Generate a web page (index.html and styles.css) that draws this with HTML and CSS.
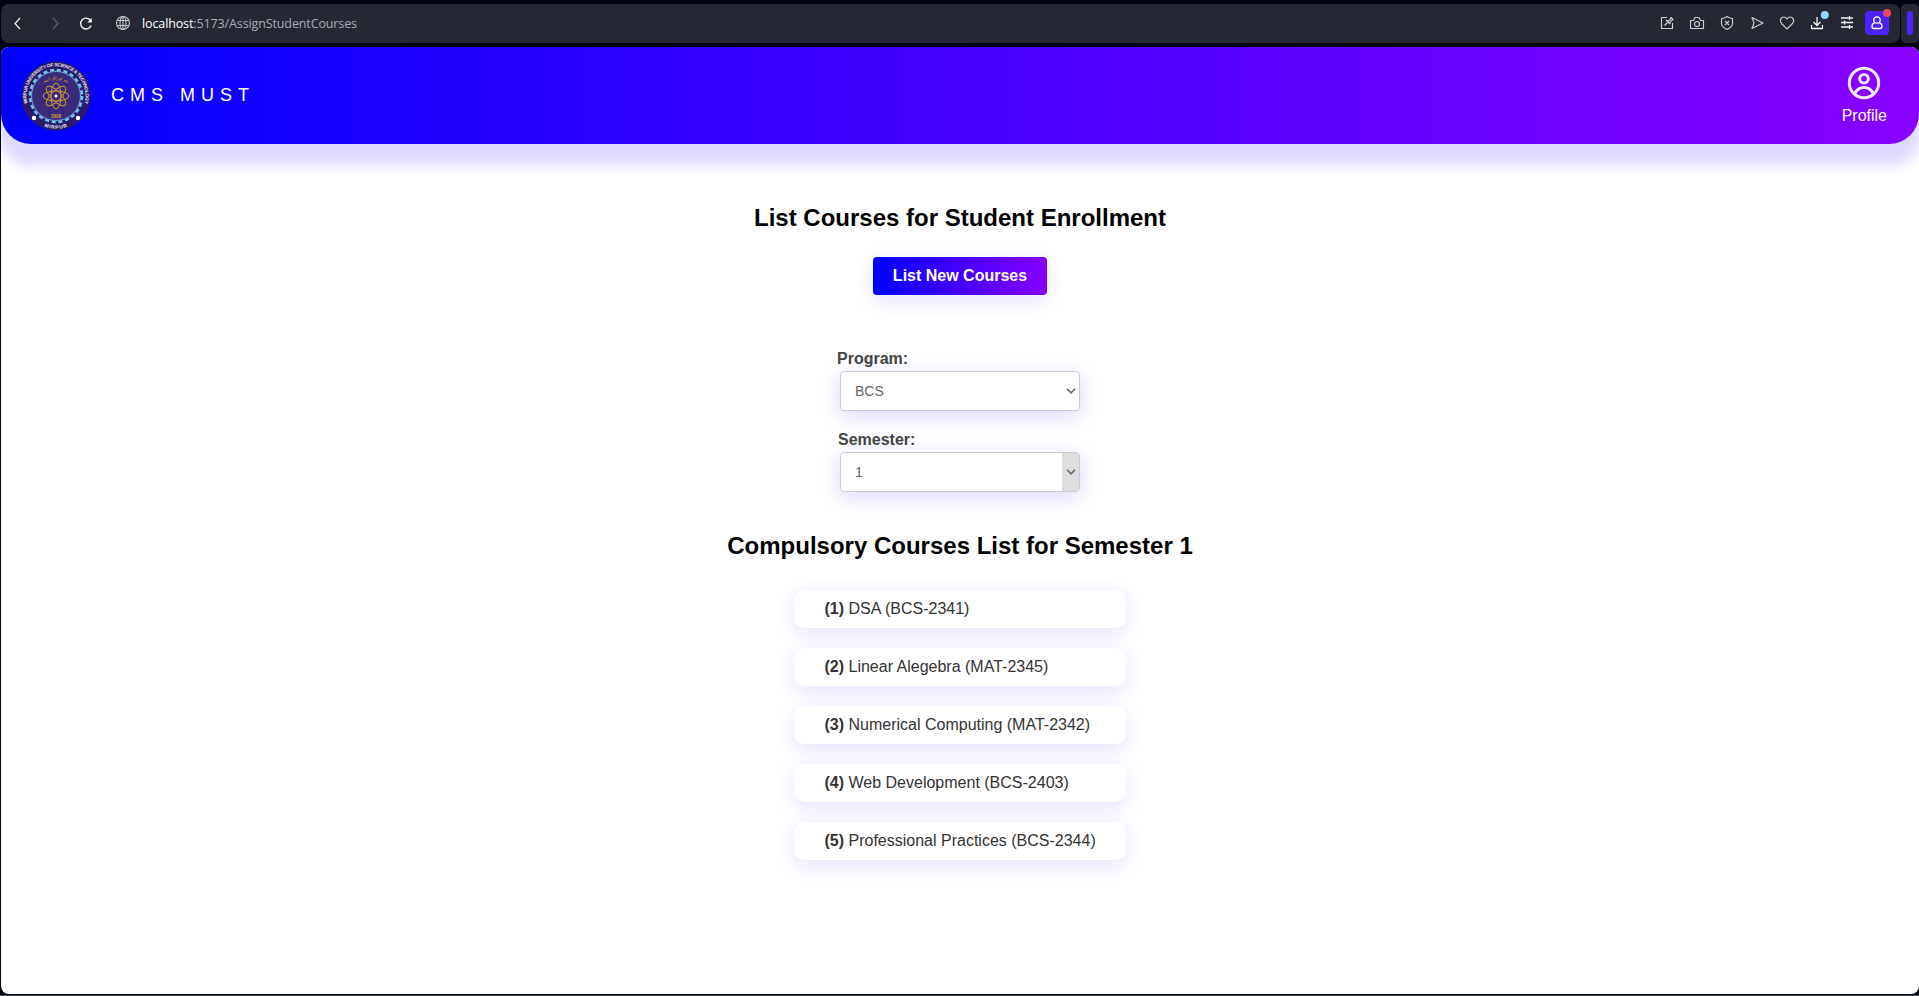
FILE: index.html
```html
<!DOCTYPE html>
<html lang="en">
<head>
<meta charset="utf-8">
<title>CMS MUST</title>
<link rel="stylesheet" href="styles.css">
</head>
<body>
<div class="toolbar-row">
  <div class="toolbar">
    <svg class="nav-icons" width="140" height="39" viewBox="0 0 140 39" fill="none">
      <path d="M19 14L14 19.500l5 5.500" stroke="#f4f5f8" stroke-width="1.2"/>
      <path d="M52 14l5 5.500-5 5.500" stroke="#5d616c" stroke-width="1.2"/>
      <path d="M89.500 16.500a5.400 5.400 0 1 0 .6 5" stroke="#f4f5f8" stroke-width="1.4"/>
      <path d="M90.800 14v4.500h-4.500z" fill="#f4f5f8"/>
      <g stroke="#c6c9d2" stroke-width="1.1"><circle cx="122" cy="19" r="6.500"/><ellipse cx="122" cy="19" rx="3" ry="6.500"/><path d="M116.300 16.500h11.400M116.300 21.500h11.400M122 12.500v13"/></g>
    </svg>
    <div class="url"><span class="host">localhost</span>:5173/AssignStudentCourses</div>
    <svg class="tool-icons" width="260" height="39" viewBox="1640 4 260 39" fill="none" stroke="#c9ccd4" stroke-width="1.150" stroke-linejoin="round">
      <path d="M1667 17.500h-5.500v11h11v-5.500M1664.500 25.500l3-3M1666 20l4 4M1667 21l2.500-.8 1.500-2.700 2 2-2.700 2-.5 2.500"/>
      <path d="M1690.500 20.500h3l1.500-3h4l1.500 3h3v8h-13z"/><circle cx="1697" cy="24" r="2.500"/>
      <path d="M1727 16.500q3 2 5.500 2v5q0 3.500-5.500 6q-5.500-2.500-5.500-6v-5q3 0 5.500-2zM1725 21l4 4M1729 21l-4 4"/>
      <path d="M1752 17.500l11 5.500-11 5.500 2-5.500z"/>
      <path d="M1787 29l-5.500-5.500q-2.500-3.500.5-6q3-1.500 5 1.500q2-3 5-1.500q3 2.500.5 6z"/>
      <g stroke="#f4f5f8" stroke-width="1.300"><path d="M1811.500 25v3.500h11v-3.500M1817 17v8M1813.500 22l3.500 3.500 3.500-3.500"/><path d="M1841 18h12M1841 22.500h12M1841 27h12M1849.500 16v4M1844.500 20.500v4M1849.500 25v4"/></g>
      <circle cx="1824.800" cy="15" r="4" fill="#8fd8ff" stroke="none"/>
      <rect x="1865" y="11" width="24" height="24" rx="4" fill="#4d22fb" stroke="none"/>
      <g stroke="#fff" stroke-width="1.300"><circle cx="1877" cy="20" r="3.200"/><path d="M1874.500 22.800q-2.500.7-2.500 3.700 0 2 2 2h6q2 0 2-2 0-3-2.500-3.700"/></g>
      <circle cx="1887" cy="13" r="4" fill="#e84a5f" stroke="none"/>
    </svg>
  </div>
  <div class="side-toggle"><span class="side-bar"></span></div>
</div>

<div class="page">
  <header class="header">
    <div class="brand">
      <svg width="70" height="70" viewBox="0 0 70 70">
        <defs><path id="ring-top" d="M10 50.500A29.500 29.500 0 1 1 60 50.500"/><path id="ring-bottom" d="M17 62.500A33 33 0 0 0 53 62.500"/><path id="motto" d="M23 22Q35 15 47 22"/></defs>
        <circle cx="35" cy="35" r="34.700" fill="#2a1a69"/>
        <circle cx="35" cy="35" r="25.800" fill="#3b2a7c"/>
        <circle cx="35" cy="35" r="26" fill="none" stroke="#72c2ec" stroke-width="2.600" stroke-dasharray="4.080 2.727"/>
        <circle cx="35" cy="35" r="24.500" fill="none" stroke="#72c2ec" stroke-width=".8"/>
        <text class="seal-text" text-anchor="middle"><textPath href="#ring-top" startOffset="50%">MIRPUR UNIVERSITY OF SCIENCE &amp; TECHNOLOGY</textPath></text>
        <text class="seal-text seal-city" text-anchor="middle"><textPath href="#ring-bottom" startOffset="50%">MIRPUR</textPath></text>
        <text class="seal-motto" text-anchor="middle"><textPath href="#motto" startOffset="50%">تعلیم اوراق انسان</textPath></text>
        <text class="seal-year" x="35" y="56.800" text-anchor="middle">2008</text>
        <circle cx="13" cy="57" r="2.200" fill="#fff"/><circle cx="57" cy="57" r="2.200" fill="#fff"/>
        <g fill="none" stroke="#d9a529" stroke-width=".9"><ellipse cx="35" cy="35" rx="13" ry="5"/><ellipse cx="35" cy="35" rx="13" ry="5" transform="rotate(45 35 35)"/><ellipse cx="35" cy="35" rx="13" ry="5" transform="rotate(90 35 35)"/><ellipse cx="35" cy="35" rx="13" ry="5" transform="rotate(135 35 35)"/></g>
        <circle cx="35" cy="35" r="1.500" fill="#fff"/>
      </svg>
      <span class="brand-name">CMS MUST</span>
    </div>
    <div class="profile">
      <svg width="34" height="34" viewBox="0 0 34 34" fill="none" stroke="#f3e9f5" stroke-width="3"><circle cx="17" cy="17" r="14.700"/><circle cx="17" cy="12.700" r="4.300"/><path d="M7.500 28q3-6.500 9.500-6.500t9.500 6.500"/></svg>
      <span>Profile</span>
    </div>
  </header>

  <main class="content">
    <h2 class="title">List Courses for Student Enrollment</h2>
    <button class="primary">List New Courses</button>
    <form class="filters">
      <label class="label" for="program">Program:</label>
      <div class="field"><select id="program" class="select"><option>BCS</option></select><span class="arrow"><svg width="10" height="6" viewBox="0 0 10 6"><path d="M1 .8l4 4 4-4"/></svg></span></div>
      <label class="label label-semester" for="semester">Semester:</label>
      <div class="field"><select id="semester" class="select"><option>1</option></select><span class="arrow arrow-active"><svg width="10" height="6" viewBox="0 0 10 6"><path d="M1 .8l4 4 4-4"/></svg></span></div>
    </form>
    <h2 class="title title-list">Compulsory Courses List for Semester 1</h2>
    <div class="courses">
      <div class="course"><b>(1)</b> DSA (BCS-2341)</div>
      <div class="course"><b>(2)</b> Linear Alegebra (MAT-2345)</div>
      <div class="course"><b>(3)</b> Numerical Computing (MAT-2342)</div>
      <div class="course"><b>(4)</b> Web Development (BCS-2403)</div>
      <div class="course"><b>(5)</b> Professional Practices (BCS-2344)</div>
    </div>
  </main>
</div>
</body>
</html>
```
FILE: styles.css
```css
* { box-sizing: border-box; }
body {
  margin: 0;
  height: 996px;
  overflow: hidden;
  display: flex;
  flex-direction: column;
  background: #020413;
  border-bottom: 1px solid #43454f;
  font-family: "Liberation Sans", Arial, sans-serif;
}
.toolbar-row { flex: none; display: flex; gap: 1px; height: 47px; padding: 4px 0 4px 1px; }
.toolbar {
  flex: 1;
  display: flex;
  align-items: center;
  background: #252833;
  border-radius: 8px;
}
.nav-icons { margin-right: 1px; }
.nav-icons, .tool-icons { flex: none; display: block; }
.url {
  flex: 1;
  font-family: "Open Sans", "Noto Sans", sans-serif;
  font-size: 12.5px;
  letter-spacing: -0.12px;
  line-height: 20px;
  color: #a9adb8;
  white-space: nowrap;
}
.host { color: #fff; }
.side-toggle {
  width: 18px;
  padding: 7px 6px 8px;
  display: flex;
  background: #252833;
  border-radius: 5px;
}
.side-bar { width: 6px; border-radius: 3px; background: #4d22fb; }
.page {
  flex: none;
  height: 947px;
  margin-left: 1px;
  background: #fff;
  border-radius: 8px;
  overflow: hidden;
}
.header {
  display: flex;
  justify-content: space-between;
  height: 97px;
  padding: 14px 32px 0 20px;
  color: #fff;
  background: linear-gradient(to right, #0000ff, #8800ff);
  border-radius: 0 0 30px 30px;
  box-shadow: 0 20px 12px 2px rgba(50, 20, 255, 0.16);
}
.brand { display: flex; height: 70px; align-items: center; gap: 20px; }
.brand-name { font-size: 18px; line-height: 20px; letter-spacing: 6px; padding-bottom: 2px; }
.seal-text { font-size: 4.7px; font-weight: bold; letter-spacing: -0.25px; fill: #e9e6f5; }
.seal-city { font-size: 5px; letter-spacing: 0.7px; }
.seal-motto { font: 4.5px "DejaVu Sans", sans-serif; fill: #e1aa20; }
.seal-year { font-size: 4.5px; font-weight: bold; fill: #d6a52e; }
.profile { display: flex; flex-direction: column; align-items: center; padding-top: 5px; gap: 7px; font-size: 16px; }
.profile svg { display: block; }
.content { display: flex; flex-direction: column; align-items: center; padding-top: 60px; }
.title { margin: 0; font-size: 24px; line-height: 28px; color: #000; }
.primary {
  width: 174px;
  height: 38px;
  margin: 25px 0 0;
  padding: 0;
  border: 0;
  border-radius: 4px;
  color: #fff;
  font: bold 16px "Liberation Sans", Arial, sans-serif;
  background: linear-gradient(to right, #0000ff, #8800ff);
  box-shadow: 0 5px 20px rgba(50, 20, 255, 0.12);
}
.filters { width: 240px; margin-top: 55px; }
.label { display: block; height: 21px; margin-left: -3px; line-height: 18px; font-size: 16px; font-weight: bold; color: #444; }
.label-semester { margin: 20px 0 0 -2px; }
.field { position: relative; height: 40px; }
.select {
  appearance: none;
  width: 240px;
  height: 40px;
  padding: 0 14px;
  border: 1px solid #c9cbd9;
  border-radius: 4px;
  background: #fff;
  color: #666;
  font: 14px "Liberation Sans", Arial, sans-serif;
  box-shadow: 0 5px 20px rgba(50, 20, 255, 0.17);
}
.arrow {
  position: absolute;
  top: 1px;
  right: 1px;
  bottom: 1px;
  width: 17px;
  display: flex;
  align-items: center;
  justify-content: center;
  pointer-events: none;
}
.arrow path { fill: none; stroke: #666; stroke-width: 1.6; }
.arrow-active { background: #dedede; }
.title-list { margin-top: 40px; }
.courses { width: 332px; margin-top: 30px; display: flex; flex-direction: column; gap: 20px; }
.course {
  height: 38px;
  padding: 0 30px 0 30.5px;
  border-radius: 10px;
  background: #fff;
  color: #333;
  font-size: 16px;
  line-height: 37px;
  white-space: nowrap;
  box-shadow: 0 5px 20px rgba(50, 20, 255, 0.13);
}
```
